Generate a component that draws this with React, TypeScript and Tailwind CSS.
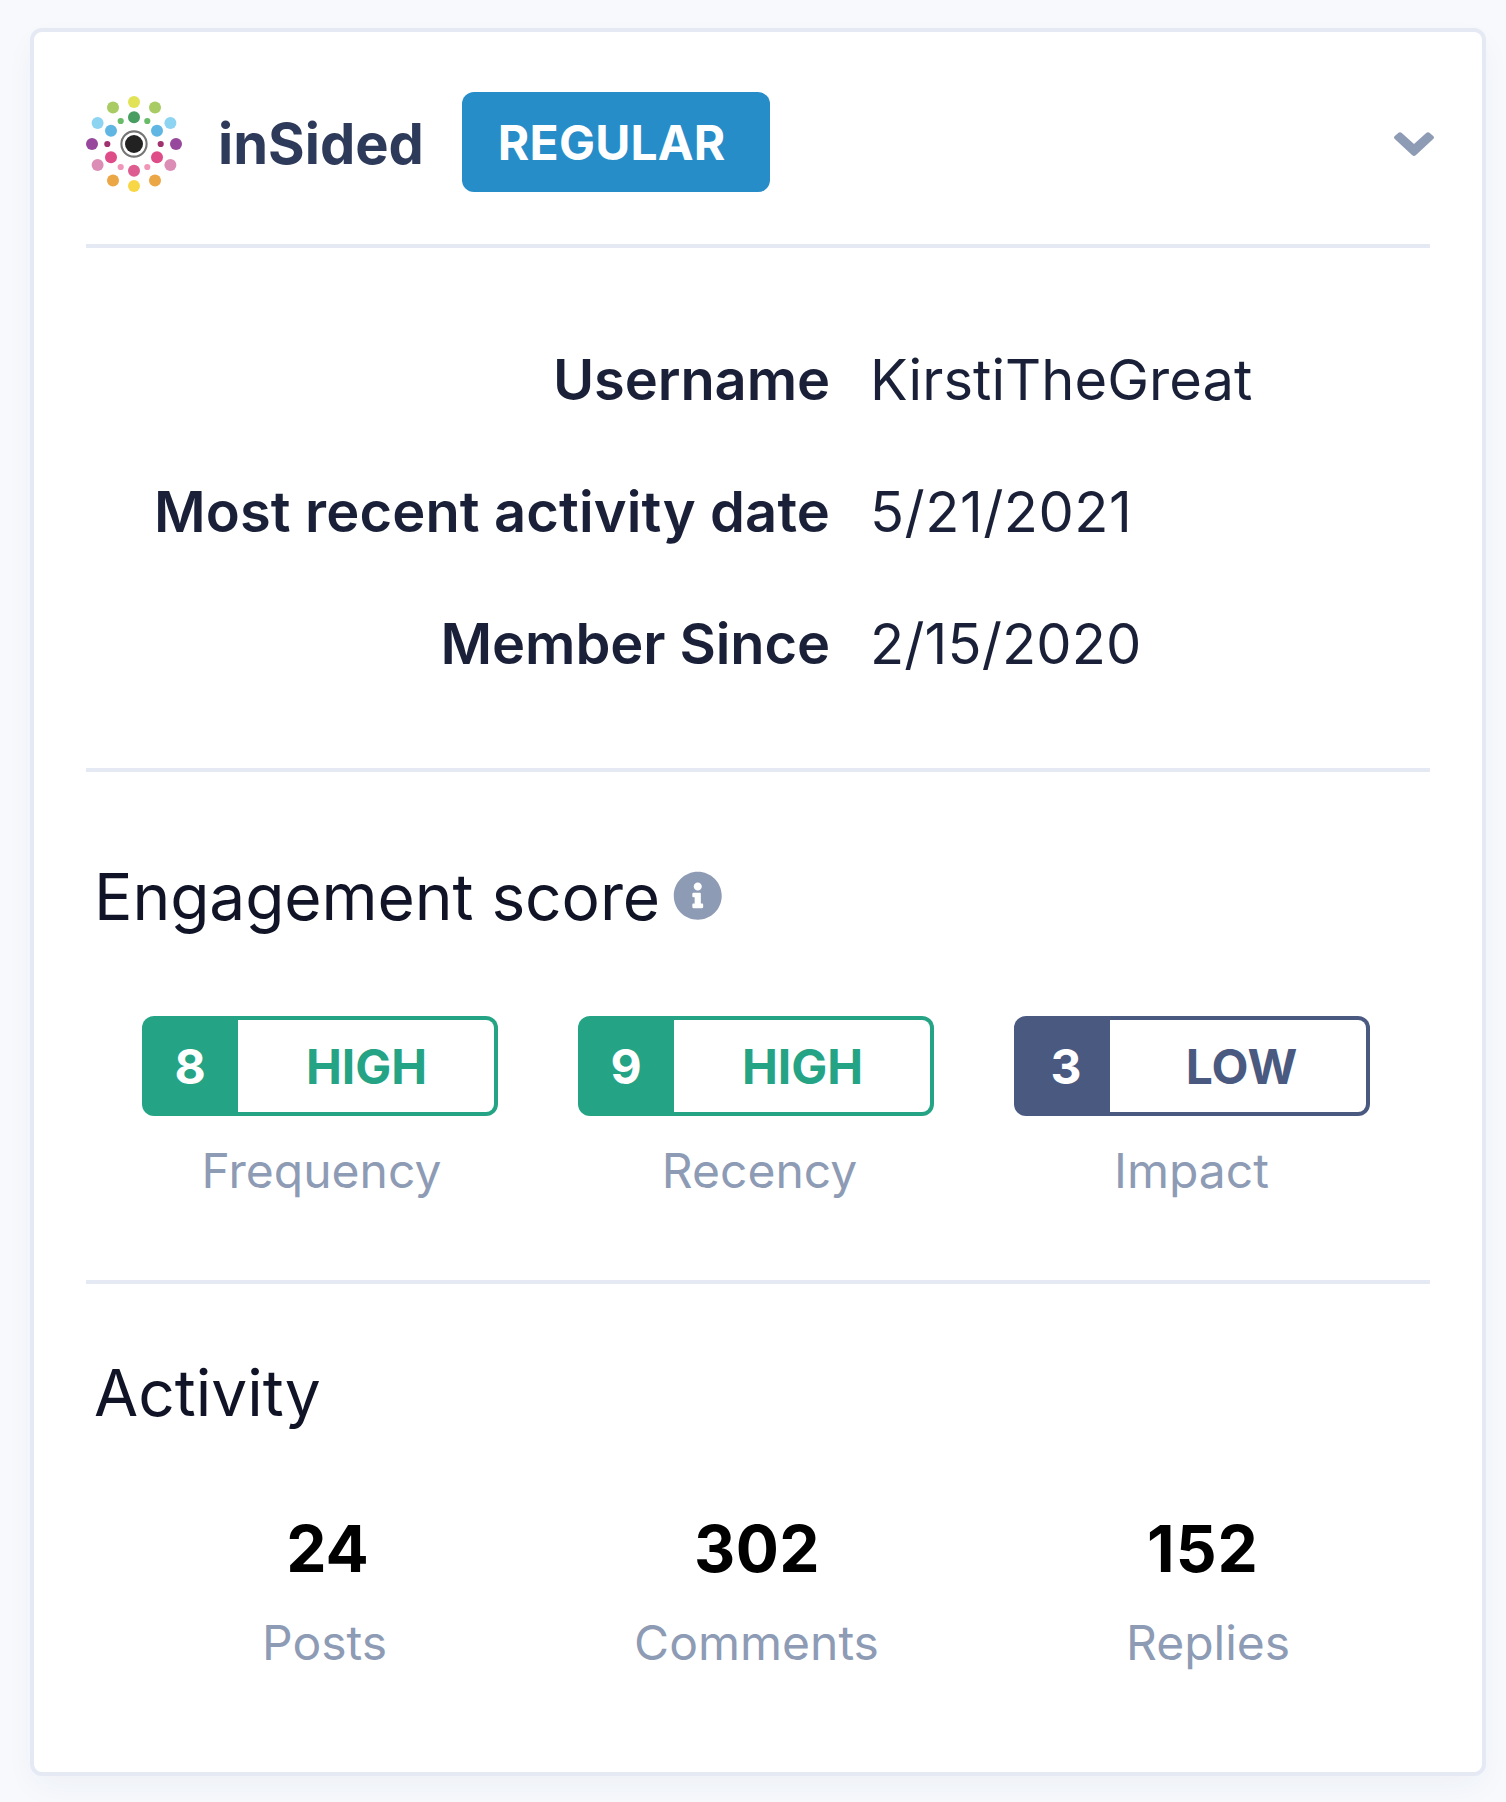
import { FaInfoCircle } from 'react-icons/fa';

interface Score {
  value: number;
  level: string;
  label: string;
  text: string;
  fill: string;
  valuePad?: string;
  levelPad?: string;
  labelPad?: string;
}

const details = [
  { label: 'Username', value: 'KirstiTheGreat', labelClass: 'tracking-[-0.1px]', valueClass: 'tracking-[0.08px]' },
  { label: 'Most recent activity date', value: '5/21/2021', labelClass: 'tracking-[0.14px]', valueClass: 'tracking-[0.5px]' },
  { label: 'Member Since', value: '2/15/2020', labelClass: 'tracking-[-0.1px]', valueClass: 'tracking-[0.12px]' },
];

const scores: Score[] = [
  {
    value: 8,
    level: 'HIGH',
    label: 'Frequency',
    text: 'text-[#24a485]',
    fill: 'bg-[#24a485]',
    valuePad: 'pr-1',
    levelPad: 'pl-px',
    labelPad: 'pl-[3px]',
  },
  {
    value: 9,
    level: 'HIGH',
    label: 'Recency',
    text: 'text-[#24a485]',
    fill: 'bg-[#24a485]',
    valuePad: 'pr-1',
    levelPad: 'pl-px',
    labelPad: 'pl-[7px]',
  },
  {
    value: 3,
    level: 'LOW',
    label: 'Impact',
    text: 'text-[#4a5980]',
    fill: 'bg-[#4a5980]',
    valuePad: 'pl-1',
    levelPad: 'pl-[7px]',
    labelPad: 'pr-px',
  },
];

const activity = [
  { count: 24, label: 'Posts', countClass: 'pl-[6px]' },
  { count: 302, label: 'Comments', countClass: 'pl-px tracking-[0.5px]' },
  { count: 152, label: 'Replies', countClass: 'pr-[10px] tracking-[1px]' },
];

// cx, cy, r, color
const dots: [number, number, number, string][] = [
  [48, 6, 6, '#e2e256'],
  [27, 11.5, 6, '#a8cb63'],
  [69, 11.5, 6, '#a8cb63'],
  [11.6, 27, 6, '#8dd3f2'],
  [84.4, 27, 6, '#8dd3f2'],
  [6, 48, 6, '#97479c'],
  [90, 48, 6, '#97479c'],
  [11.6, 69, 6, '#dc8db5'],
  [84.4, 69, 6, '#dc8db5'],
  [27, 84.5, 6, '#eba646'],
  [69, 84.5, 6, '#eba646'],
  [48, 90, 6, '#f8d747'],
  [48, 21.3, 6, '#489e60'],
  [25, 34.7, 6, '#60b6e2'],
  [71, 34.7, 6, '#60b6e2'],
  [25, 61.3, 6, '#df4d89'],
  [71, 61.3, 6, '#df4d89'],
  [48, 74.7, 6, '#dd5d90'],
  [34.7, 25, 3.1, '#68bb67'],
  [61.3, 25, 3.1, '#68bb67'],
  [21.3, 48, 3.1, '#a0326e'],
  [74.7, 48, 3.1, '#a0326e'],
  [34.7, 71, 3.1, '#f097b9'],
  [61.3, 71, 3.1, '#f097b9'],
];

function Logo() {
  return (
    <svg className="size-24 shrink-0" viewBox="0 0 96 96">
      {dots.map(([cx, cy, r, color]) => (
        <circle key={`${cx}-${cy}`} cx={cx} cy={cy} r={r} fill={color} />
      ))}
      <circle cx="48" cy="48" r="12.6" fill="none" stroke="#757575" strokeWidth="2.1" />
      <circle cx="48" cy="48" r="9" fill="#222" />
    </svg>
  );
}

function ChevronDown() {
  return (
    <svg className="w-10 h-6" viewBox="0 0 40 24" fill="#8e9bb5">
      <path d="M4.2 .9Q6 -.6 7.8 .9L20 12 32.2 .9Q34 -.6 35.8 .9L39.2 4Q40.8 5.5 39.2 7L22 23.1Q20 24.8 18 23.1L.8 7Q-.8 5.5 .8 4Z" />
    </svg>
  );
}

export default function App() {
  return (
    <div className="h-[1802px] w-[1506px] overflow-hidden bg-[#f7f9fd] pt-7 pl-[30px] font-['Inter',sans-serif]">
      <div className="h-[1748px] w-[1456px] rounded-xl border-4 border-[#e4e9f3] bg-white px-[52px] shadow-[0_12px_32px_-4px_rgba(44,51,73,0.05)]">
        {/* Header */}
        <div className="flex h-[216px] items-center border-b-4 border-[#e4e9f3] pt-3">
          <Logo />
          <h2 className="ml-9 text-[56px] leading-none font-bold text-[#2e3a59]">inSided</h2>
          <span className="mb-1 ml-[38px] flex h-[100px] w-[308px] items-center rounded-xl bg-[#268dc9] pt-0.5 pl-9 text-5xl font-bold tracking-[0.2px] text-white">
            REGULAR
          </span>
          <button className="-mr-1 ml-auto">
            <ChevronDown />
          </button>
        </div>

        {/* Details */}
        <div className="h-[524px] border-b-4 border-[#e4e9f3] pt-[66px] text-[56px] text-[#192038]">
          {details.map((item) => (
            <div key={item.label} className="flex h-[132px] items-center gap-10 leading-none">
              <div className={`w-[744px] text-right font-semibold whitespace-nowrap ${item.labelClass}`}>{item.label}</div>
              <div className={item.valueClass}>{item.value}</div>
            </div>
          ))}
        </div>

        {/* Engagement score */}
        <div className="h-[512px] border-b-4 border-[#e4e9f3] pt-[77px]">
          <h3 className="flex h-24 items-center gap-[13px] pl-2 text-[64px] tracking-[-0.07px] text-[#101426]">
            Engagement score
            <FaInfoCircle className="mb-0.5 size-[49.5px] text-[#8e9bb5]" />
          </h3>
          <div className="mt-[71px] flex gap-20 pl-14">
            {scores.map((score) => (
              <div key={score.label} className="w-[356px] text-center">
                <div className={`flex h-[100px] rounded-xl p-1 text-5xl font-bold ${score.fill}`}>
                  <div className={`flex w-[92px] items-center justify-center pt-0.5 text-white ${score.valuePad}`}>
                    {score.value}
                  </div>
                  <div
                    className={`flex flex-1 items-center justify-center rounded-r-lg bg-white pt-0.5 ${score.text} ${score.levelPad}`}
                  >
                    {score.level}
                  </div>
                </div>
                <div className={`mt-[23px] text-5xl leading-[64px] text-[#8e9bb5] ${score.labelPad}`}>{score.label}</div>
              </div>
            ))}
          </div>
        </div>

        {/* Activity */}
        <div className="pt-[61px]">
          <h3 className="flex h-24 items-center pl-2 text-[64px] text-[#101426]">Activity</h3>
          <div className="mt-[68px] flex gap-[247px] pl-[176px] text-center">
            {activity.map((item) => (
              <div key={item.label}>
                <div className={`text-[64px] leading-20 font-bold text-black ${item.countClass}`}>{item.count}</div>
                <div className="mt-[22px] text-5xl leading-[64px] text-[#8e9bb5]">{item.label}</div>
              </div>
            ))}
          </div>
        </div>
      </div>
    </div>
  );
}
